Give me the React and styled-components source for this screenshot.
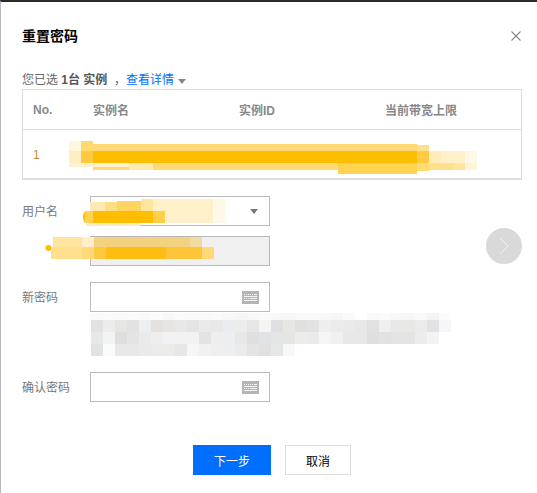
import styled, { createGlobalStyle } from "styled-components";

const GlobalStyle = createGlobalStyle`
  html, body {
    margin: 0;
    padding: 0;
    background: #fff;
  }
  * {
    box-sizing: border-box;
  }
`;

// redacted areas of the screenshot, [x, y, w, h, colour] in page pixels
const tableBlur = [
  [69, 141, 12, 10, "#fff6df"],
  [69, 151, 12, 12, "#ffeebf"],
  [81, 141, 12, 10, "#ffd96b"],
  [81, 151, 12, 12, "#ffc93f"],
  [93, 144, 324, 7, "#ffd975"],
  [93, 151, 324, 12, "#ffbd00"],
  [93, 163, 245, 7, "#ffd973"],
  [69, 163, 60, 4, "#fff1cf"],
  [129, 163, 24, 7, "#ffeab0"],
  [338, 163, 79, 11, "#ffd24f"],
  [417, 145, 12, 6, "#ffe08a"],
  [417, 151, 12, 12, "#ffcb45"],
  [417, 163, 12, 8, "#ffdc70"],
  [429, 151, 12, 12, "#ffecb8"],
  [441, 151, 24, 12, "#fff0c8"],
  [465, 151, 12, 12, "#fff8e6"],
  [429, 163, 24, 7, "#ffe08a"],
  [453, 163, 12, 7, "#ffe59b"],
  [465, 163, 12, 7, "#fff4d5"],
];

const selectBlur = [
  [90, 202, 15, 9, "#ffe9b0"],
  [105, 202, 12, 9, "#ffdf85"],
  [117, 201, 24, 10, "#ffd55f"],
  [141, 199, 12, 12, "#ffe69f"],
  [153, 199, 60, 12, "#fff0c8"],
  [213, 199, 12, 12, "#fff8e6"],
  [85, 211, 8, 12, "#ffd24f"],
  [93, 211, 60, 12, "#ffbd00"],
  [153, 211, 12, 12, "#ffcf47"],
  [165, 211, 48, 12, "#fff0cc"],
  [213, 211, 12, 12, "#fff8e8"],
  [86, 223, 54, 3, "#ffedc0"],
];

const disabledBlur = [
  [52, 237, 29, 10, "#ffe4a0"],
  [81, 237, 12, 10, "#ffeec8"],
  [93, 237, 96, 10, "#f2d27f"],
  [189, 237, 12, 10, "#f0dc9f"],
  [50, 247, 31, 12, "#ffe08f"],
  [81, 247, 12, 12, "#ffd978"],
  [93, 247, 12, 12, "#ffc93d"],
  [105, 247, 60, 12, "#ffbd14"],
  [165, 247, 36, 12, "#ffc53a"],
  [201, 247, 12, 12, "#ffd978"],
];

const hintRows = [
  { y: 313, h: 7, cells: ["fafafa", "fbfbfb", "fafafa", "fbfbfb", "f9f9f9", "fcfcfc", "f8f8f8", "fbfbfb", "fafafa", "f9f9f9", "fbfbfb", "f8f8f8", "f6f6f6", "f8f8f8", "fafafa", "f8f8f8", "f7f7f7", "f9f9f9", "fafafa", "f8f8f8", "f6f6f6", "fafafa", "fefefe", "f9f9f9", "fafbfb", "f8f8f8", "f7f7f7", "fafafa", "f4f4f4", "fcfcfc"] },
  { y: 320, h: 12, cells: ["e2e2e2", "ececea", "e6e6e4", "e2e2e2", "eceef0", "e4e2e0", "e6e5e4", "e8e8e8", "e4e4e4", "eaeaec", "e8e8e8", "ebecee", "ececea", "e6e6e6", "f4f4f2", "e0e0e2", "e6e6e4", "e0e0e0", "e2e2e2", "eeeeee", "ebebeb", "eaeae8", "e8e8e8", "e2e0e0", "eef0f0", "e8e8e8", "e8e8e6", "ebebeb", "e2e2e4", "f6f6f8"] },
  { y: 332, h: 12, cells: ["e6e8ea", "f2f4f4", "dedede", "e4e4e2", "e8eaec", "f0eeec", "f0f2f4", "f2f2f2", "f2f2f0", "e4e2e2", "eeeeee", "eceef0", "e8e8e8", "e0dede", "e0e4e8", "e4e6e6", "e4e6e4", "ececea", "eaecec", "f4f6f6", "f0f0f0", "e8e8e8", "e8e8e8", "dfdfdf", "e2e2e2", "e4e4e4", "e4e4e4", "ececec", "f2f4f4"] },
  { y: 344, h: 12, cells: ["e0e2e4", "fafafa", "e8e8e8", "e8e8e8", "eaeaea", "ebebeb", "ebecea", "e6e6e6", "f6f6f6", "f0f2f2", "efefef", "eceef0", "ecebea", "e4e4e6", "e0e0e0", "e6e6e6", "f6f8fa"] },
];

const hintBlur = hintRows.flatMap((row) =>
  row.cells.map((c, i) => [91 + i * 12, row.y, 12, row.h, "#" + c])
);

const Blur = ({ cells, left, top, box, dots }) => {
  const [x, y, w, h] = box;
  return (
    <BlurOverlay
      $left={left}
      $top={top}
      width={w}
      height={h}
      viewBox={`${x} ${y} ${w} ${h}`}
    >
      {dots}
      {cells.map(([cx, cy, cw, ch, fill], i) => (
        <rect key={i} x={cx} y={cy} width={cw} height={ch} fill={fill} />
      ))}
    </BlurOverlay>
  );
};

const KeyboardIcon = () => (
  <KeyboardSvg viewBox="0 0 17 13" shapeRendering="crispEdges">
    <rect width="17" height="13" fill="#b4b4b4" />
    <path
      d="M2 3h1M4 3h1M6 3h1M8 3h1M10 3h1M12 3h3M2 5h13M2 7h1M4 7h1M6 7h1M8 7h7M2 9h13"
      stroke="#f4f4f4"
      strokeWidth="1"
      fill="none"
    />
  </KeyboardSvg>
);

const PasswordField = () => (
  <Field>
    <KeyboardIcon />
  </Field>
);

const App = () => {
  return (
    <>
      <GlobalStyle />
      <Modal>
        <Header>
          <Title>重置密码</Title>
          <CloseIcon viewBox="0 0 10 10">
            <path d="M.5.5l9 9M9.5.5l-9 9" stroke="#888" strokeWidth="1.1" fill="none" />
          </CloseIcon>
        </Header>

        <Selection>
          您已选 <strong>1台 实例</strong>&nbsp;&nbsp;，<DetailLink>查看详情</DetailLink>
          <DetailCaret />
        </Selection>

        <Table>
          <HeadRow>
            <span>No.</span>
            <span>实例名</span>
            <span>实例ID</span>
            <span>当前带宽上限</span>
          </HeadRow>
          <BodyRow>
            <span>1</span>
            <Blur cells={tableBlur} left={46} top={11} box={[69, 141, 408, 33]} />
          </BodyRow>
        </Table>

        <Form>
          <FormRow>
            <Label>用户名</Label>
            <Field>
              <Blur
                cells={selectBlur}
                left={-9}
                top={2}
                box={[82, 199, 143, 27]}
                dots={<ellipse cx="86" cy="217" rx="3" ry="6" fill="#ffbd00" />}
              />
              <SelectCaret />
            </Field>
          </FormRow>
          <FormRow $gap={16}>
            <Label />
            <Field $disabled>
              <Blur
                cells={disabledBlur}
                left={-46}
                top={-1}
                box={[44, 236, 169, 24]}
                dots={<circle cx="47.5" cy="248" r="3" fill="#ffbd00" />}
              />
            </Field>
          </FormRow>
          <NextButton>
            <svg width="12" height="18" viewBox="0 0 12 18">
              <path d="M2 1l8 8-8 8" stroke="#f0f0f0" strokeWidth="1" fill="none" />
            </svg>
          </NextButton>
          <FormRow>
            <Label>新密码</Label>
            <PasswordField />
          </FormRow>
          <Hint>
            <Blur cells={hintBlur} left={69} top={1} box={[91, 313, 360, 43]} />
          </Hint>
          <FormRow>
            <Label>确认密码</Label>
            <PasswordField />
          </FormRow>
        </Form>

        <Footer>
          <PrimaryButton>下一步</PrimaryButton>
          <CancelButton>取消</CancelButton>
        </Footer>
      </Modal>
    </>
  );
};

export default App;

const Modal = styled.div`
  width: 537px;
  height: 493px;
  overflow: hidden;
  background: #fff;
  border-top: 2px solid #2a2a2a;
  border-left: 1px solid #b4b9bf;
  padding: 24px 15px 0 21px;
  font-family: "Liberation Sans", "Noto Sans CJK SC", sans-serif;
  font-size: 12px;
  color: #666;
`;
const Header = styled.div`
  display: flex;
  align-items: center;
  justify-content: space-between;
  height: 20px;
  padding-right: 1px;
`;
const Title = styled.h3`
  margin: 0 0 2px;
  font-size: 14px;
  font-weight: 700;
  color: #000;
`;
const CloseIcon = styled.svg`
  width: 10px;
  height: 10px;
`;
const Selection = styled.div`
  margin-top: 25px;
  height: 18px;
  line-height: 18px;
  strong {
    font-weight: 700;
    color: #555;
  }
`;
const DetailLink = styled.a`
  color: #006eff;
  cursor: pointer;
`;
const DetailCaret = styled.i`
  display: inline-block;
  margin-left: 4px;
  border-top: 5px solid #888;
  border-left: 4px solid transparent;
  border-right: 4px solid transparent;
`;
const Table = styled.div`
  border: 1px solid #ddd;
  border-bottom-width: 2px;
  height: 91px;
`;
const HeadRow = styled.div`
  display: grid;
  grid-template-columns: 60px 146px 146px 1fr;
  align-items: center;
  height: 40px;
  padding-left: 10px;
  font-weight: 700;
  color: #888;
  border-bottom: 1px solid #ddd;
`;
const BodyRow = styled.div`
  position: relative;
  display: flex;
  align-items: center;
  height: 48px;
  padding: 2px 0 0 10px;
  color: #c08a30;
`;
const BlurOverlay = styled.svg`
  position: absolute;
  left: ${(p) => p.$left}px;
  top: ${(p) => p.$top}px;
`;
const Form = styled.div`
  position: relative;
  margin-top: 16px;
`;
const FormRow = styled.div`
  display: flex;
  align-items: center;
  height: 30px;
  margin-bottom: ${(p) => p.$gap || 0}px;
  & + & {
    margin-top: 10px;
  }
`;
const Label = styled.label`
  width: 68px;
  flex-shrink: 0;
  padding-bottom: 2px;
  color: #777;
`;
const Field = styled.div`
  position: relative;
  width: 180px;
  height: 30px;
  display: flex;
  align-items: center;
  justify-content: flex-end;
  padding-right: 10px;
  background: ${(p) => (p.$disabled ? "#f0f0f0" : "#fff")};
  border: 1px solid ${(p) => (p.$disabled ? "#b8b8b8" : "#bbb")};
`;
const SelectCaret = styled.i`
  position: relative;
  margin-right: 1px;
  border-top: 5px solid #777;
  border-left: 4px solid transparent;
  border-right: 4px solid transparent;
`;
const KeyboardSvg = styled.svg`
  width: 17px;
  height: 13px;
  margin-right: 0;
`;
const NextButton = styled.div`
  position: absolute;
  left: 464px;
  top: 32px;
  width: 36px;
  height: 36px;
  border-radius: 50%;
  background: #d9d9d9;
  display: flex;
  align-items: center;
  justify-content: center;
`;
const Hint = styled.div`
  position: relative;
  height: 60px;
`;
const Footer = styled.div`
  display: flex;
  gap: 14px;
  margin-top: 43px;
  padding-left: 171px;
`;
const PrimaryButton = styled.button`
  width: 78px;
  height: 30px;
  border: 0;
  padding: 0;
  background: #006eff;
  color: #fff;
  font: inherit;
`;
const CancelButton = styled.button`
  width: 66px;
  height: 30px;
  padding: 0;
  background: #fff;
  border: 1px solid #ddd;
  color: #000;
  font: inherit;
`;
